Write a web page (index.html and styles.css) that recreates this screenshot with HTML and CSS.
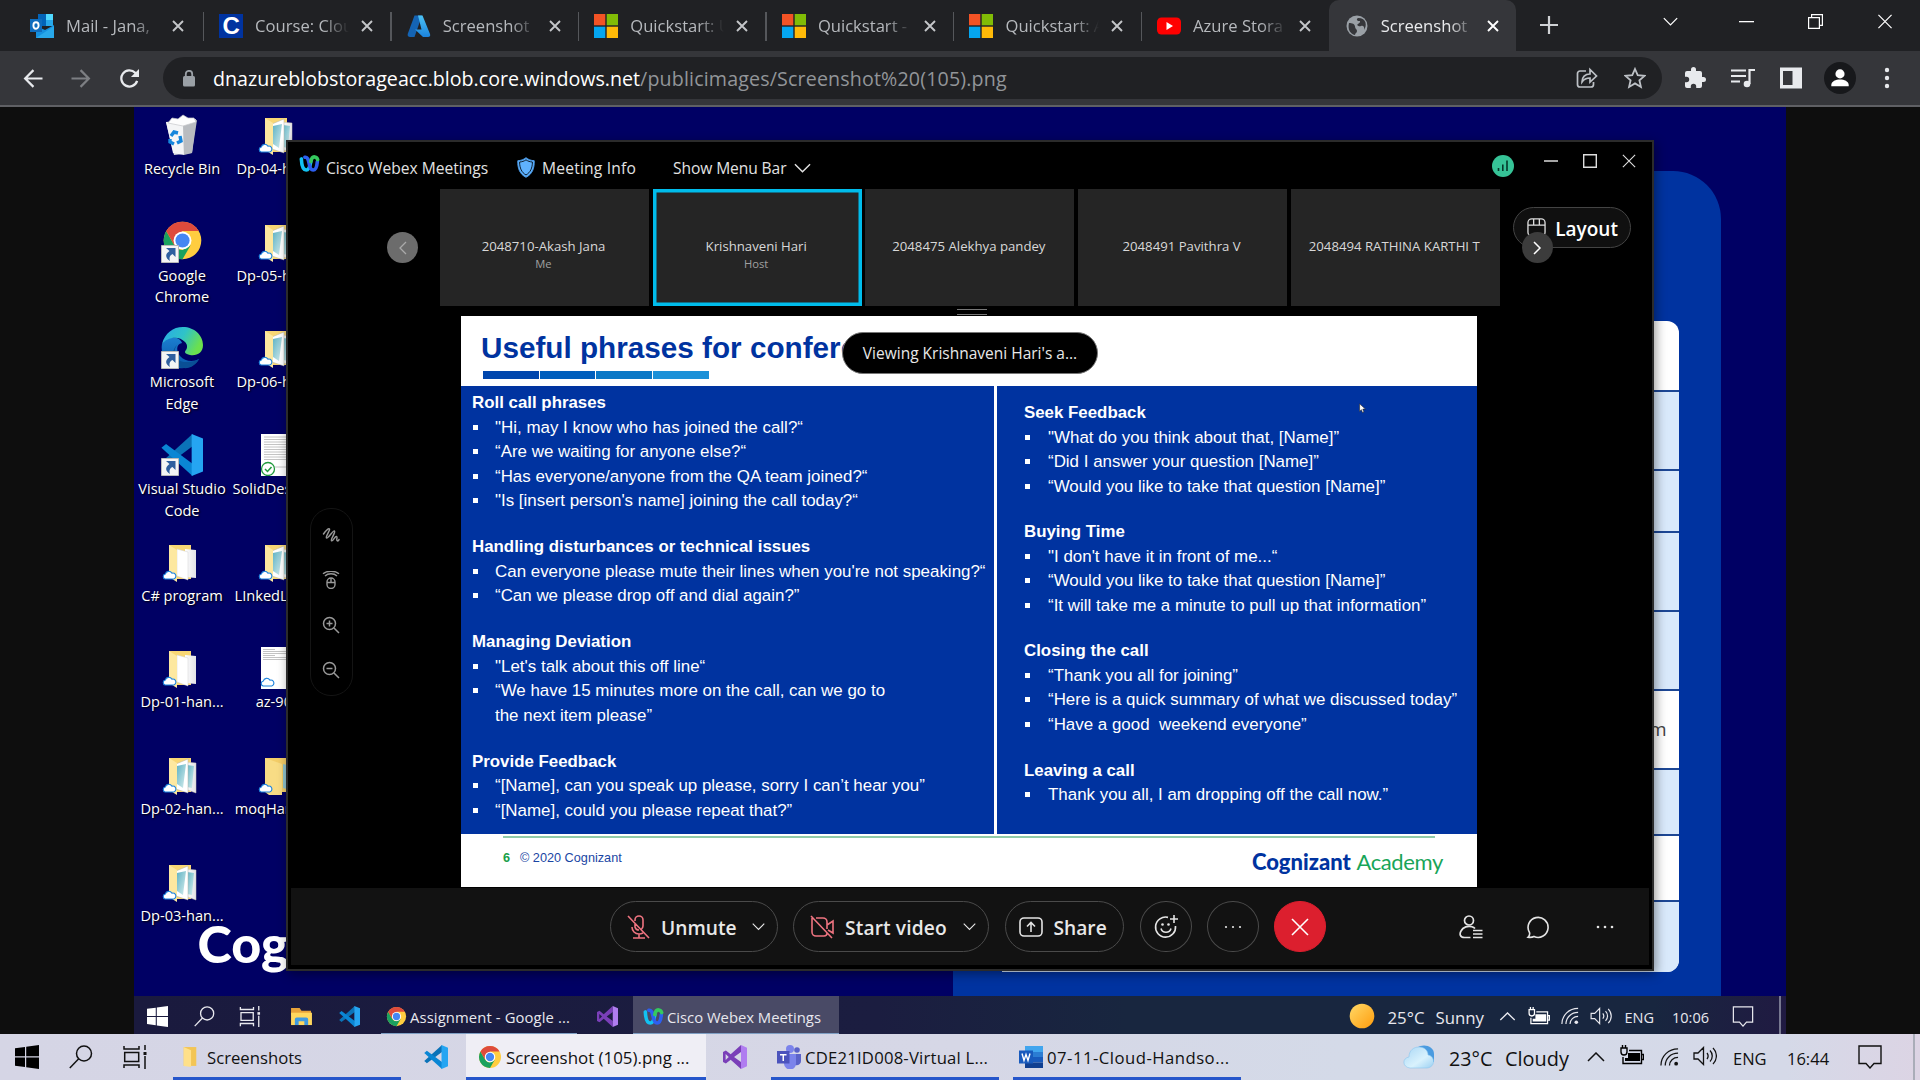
FILE: index.html
```html
<!DOCTYPE html>
<html lang="en">
<head>
<meta charset="utf-8">
<title>Screenshot (105).png</title>
<link rel="stylesheet" href="styles.css">
</head>
<body>
<svg class="defs" width="0" height="0">
  <defs>
    <linearGradient id="g-edge" x1="0" y1="0" x2="1" y2="0.4"><stop offset="0" stop-color="#2aa9e8"/><stop offset=".55" stop-color="#2fc3c8"/><stop offset="1" stop-color="#6be04e"/></linearGradient>
    <linearGradient id="g-edge2" x1="0" y1="0" x2="0" y2="1"><stop offset="0" stop-color="#1b7fd0"/><stop offset="1" stop-color="#0a57a8"/></linearGradient>
    <linearGradient id="g-az" x1="0" y1="0" x2="0" y2="1"><stop offset="0" stop-color="#4cc3f5"/><stop offset="1" stop-color="#1b82dc"/></linearGradient>
    <linearGradient id="g-sun" x1="0" y1="0" x2="1" y2="1"><stop offset="0" stop-color="#ffd968"/><stop offset="1" stop-color="#ff9c0c"/></linearGradient>
    <linearGradient id="g-cloud" x1="0" y1="0" x2="1" y2="1"><stop offset="0" stop-color="#a8d6f5"/><stop offset=".6" stop-color="#d9f2fd"/><stop offset="1" stop-color="#9bd0f2"/></linearGradient>
    <linearGradient id="g-pic" x1="0" y1="0" x2="1" y2="1"><stop offset="0" stop-color="#5fb2c4"/><stop offset="1" stop-color="#d7eeee"/></linearGradient>
    <linearGradient id="g-paper" x1="0" y1="0" x2="1" y2="0"><stop offset="0" stop-color="#ffffff"/><stop offset="1" stop-color="#e2e2e6"/></linearGradient>
  </defs>
  <symbol id="chrome" viewBox="0 0 48 48"><circle cx="24" cy="24" r="22" fill="#ffcd40"/><path fill="#1aa15f" d="M4.950 13 14.470 29.500A11 11 0 0 0 24 35L33.500 29.500 24 46A22 22 0 0 1 4.950 13z"/><path fill="#de4b3c" d="M24 2a22 22 0 0 1 19.050 11H24L14.470 29.500 4.950 13A22 22 0 0 1 24 2z"/><circle cx="24" cy="24" r="10.500" fill="#fff"/><circle cx="24" cy="24" r="8.300" fill="#4587f3"/></symbol>
  <symbol id="vscode" viewBox="0 0 100 100"><path fill="#0b73b8" d="M75 0v29L12 76 1 67z"/><path fill="#0a86d4" d="M75 100V71L12 24 1 33z"/><path fill="#25a5f2" d="M73 0l27 11v78l-27 11z"/></symbol>
  <symbol id="vs" viewBox="0 0 100 100"><path fill="#7a3fb8" fill-rule="evenodd" d="M75 0v100L32 61 12 77 0 71V29l12-6 20 16zM75 29 46 50l29 21zM11 38v24l13-12z"/><path fill="#b07df0" d="M75 0l25 11v78l-25 11z"/></symbol>
  <symbol id="webex" viewBox="0 0 32 26"><g fill="none" stroke-width="5.500" stroke-linecap="round"><path stroke="#12c2f2" d="M3.500 6C4 16 6 23 11 23c4 0 6-6 7-13"/><path stroke="#2d5ff0" d="M9 3.500c4-1 5.500 4 6.500 10 1 6 2.500 9.500 6 9.500 4 0 6-7 6.500-13"/><path stroke="#35c95e" d="M18 10c1-5 3-7.500 6-7 2.500.5 4 2 4.500 4"/></g></symbol>
  <symbol id="ms" viewBox="0 0 24 24"><path fill="#f35325" d="M0 0h11.300v11.300H0z"/><path fill="#81bc06" d="M12.700 0H24v11.300H12.700z"/><path fill="#05a6f0" d="M0 12.700h11.300V24H0z"/><path fill="#ffba08" d="M12.700 12.700H24V24H12.700z"/></symbol>
  <symbol id="win" viewBox="0 0 24 24"><path fill="currentColor" d="M0 3.200 10 1.900v9.400H0zM11.200 1.700 24 0v11.300H11.200zM0 12.500h10V22L0 20.700zM11.200 12.500H24V24l-12.800-1.800z"/></symbol>
  <symbol id="search" viewBox="0 0 24 24"><g fill="none" stroke="currentColor" stroke-width="1.500"><circle cx="15" cy="8.500" r="7.500"/><path d="M9.700 13.800.8 23"/></g></symbol>
  <symbol id="taskview" viewBox="0 0 24 24"><g fill="none" stroke="currentColor" stroke-width="1.500"><path d="M1 1v3h15V1M1 23v-3h15v3M1.700 7.500h14v9h-14zM22 0v5M22 11v13"/></g><path fill="currentColor" d="M20.500 7h3v3h-3z"/></symbol>
  <symbol id="x" viewBox="0 0 12 12"><path fill="none" stroke="currentColor" stroke-width="1.900" d="M1 1l10 10M11 1 1 11"/></symbol>
  <symbol id="xthin" viewBox="0 0 16 16"><path fill="none" stroke="currentColor" stroke-width="1.300" d="M1 1l14 14M15 1 1 15"/></symbol>
  <symbol id="chev" viewBox="0 0 18 10"><path fill="none" stroke="currentColor" stroke-width="1.500" d="M1 1l8 8 8-8"/></symbol>
  <symbol id="chevup" viewBox="0 0 18 10"><path fill="none" stroke="currentColor" stroke-width="1.500" d="M1 9l8-8 8 8"/></symbol>
  <symbol id="battery" viewBox="0 0 24 20"><path fill="currentColor" d="M8 8h12v8H5v-3h3z"/><path fill="none" stroke="currentColor" stroke-width="1.400" d="M9 5.500h12.500v13H3V12M22 9.500h1.500v5H22M1 3v4c0 4 6 4 6 0V3zM2.500 0v3M5.500 0v3"/></symbol>
  <symbol id="wifi" viewBox="0 0 20 20"><g fill="none" stroke="currentColor" stroke-width="1.300"><path d="M1 19C1 9 9 1.500 19 1.500M5.500 19C5.500 11.500 11.500 6 19 6M10 19c0-5 4-8.500 9-8.500"/></g><circle cx="17" cy="17" r="2" fill="currentColor"/></symbol>
  <symbol id="vol" viewBox="0 0 24 20"><g fill="none" stroke="currentColor" stroke-width="1.300"><path d="M1 7h4l5.500-5.500v17L5 13H1zM14 7c1.500 2 1.500 4 0 6M17 4.500c3 3 3 8 0 11M20 2c4.500 4.500 4.500 11.500 0 16"/></g></symbol>
  <symbol id="note" viewBox="0 0 24 24"><path fill="none" stroke="currentColor" stroke-width="1.400" d="M1 1h22v17.500h-7L12 23l-4-4.500H1z"/></symbol>
  <symbol id="arrowbox" viewBox="0 0 18 18"><path fill="#f5f5f5" stroke="#b9b9b9" d="M.5.5h17v17H.5z"/><path fill="#2f5f9f" d="M5 3h9.500v9l-3-3c-3 1.500-3.500 4-2.500 7C4 13 4 9 8.500 6z"/></symbol>
  <symbol id="cloudlet" viewBox="0 0 16 11"><path fill="#fff" stroke="#1b82dc" stroke-width="1.200" d="M3.500 10.300a2.700 2.700 0 0 1 0-5.300A3.800 3.800 0 0 1 10.500 4a3.200 3.200 0 0 1 2 6.300z"/></symbol>
  <symbol id="folder-pic" viewBox="0 0 42 42"><path fill="#f8d775" d="M8 4h22v34H12L8 36z"/><path fill="url(#g-paper)" stroke="#c8c4b8" stroke-width=".5" d="M24 8l11 1v30l-11-4z"/><path fill="url(#g-pic)" d="M26 11l7 1-2 22-5-1z"/><path fill="#fff" stroke="#b5b2a6" stroke-width=".5" d="M15 10l12-5v34l-12-4z"/><path fill="url(#g-pic)" d="M16 12l9-2-3 24-6-4z"/><path fill="#fde8a0" d="M8 4l8 5v32L8 36z"/><use href="#cloudlet" x="1" y="28" width="15" height="11"/></symbol>
  <symbol id="folder-doc" viewBox="0 0 42 42"><path fill="#f8d775" d="M8 4h22v34H12L8 36z"/><path fill="url(#g-paper)" d="M24 8l11 1v28l-11-1z"/><path fill="#fff" stroke="#d0d0d0" stroke-width=".5" d="M16 8l11 3v28l-11-4z"/><path fill="#fde8a0" d="M8 4l8 5v32L8 36z"/><use href="#cloudlet" x="1" y="28" width="15" height="11"/></symbol>
</svg>

<header class="tabstrip">
  <div class="tab tab-first"><svg class="fav" viewBox="0 0 24 24"><path fill="#28a8ea" d="M8 0h15v12H8z"/><path fill="#0364b8" d="M8 0h8v12H8z"/><path fill="#50d9ff" d="M16 0h7v6h-7z"/><path fill="#1490df" d="M6 12l9 4 9-5v13H6z"/><path fill="#28a8ea" d="M6 24 24 12v12z"/><path fill="#0f6cbd" d="M0 5h12v13H0z"/><ellipse cx="6" cy="11.500" rx="2.600" ry="3.200" fill="none" stroke="#fff" stroke-width="1.900"/></svg><span class="tab-text">Mail - Jana,</span><svg class="tab-x"><use href="#x"/></svg></div>
  <div class="tab"><span class="fav fav-c">C</span><span class="tab-text">Course: Clou</span><svg class="tab-x"><use href="#x"/></svg></div>
  <div class="tab"><svg class="fav" viewBox="0 0 24 24"><path fill="#1464b4" d="M7.500 1.500H15L7.500 23H3.200C1 23 .2 21.500.8 19.800z"/><path fill="url(#g-az)" d="M11 1.500h4.500L23 20c.7 1.700-.3 3-2 3h-5L8 15.500h6.500z"/></svg><span class="tab-text">Screenshot</span><svg class="tab-x"><use href="#x"/></svg></div>
  <div class="tab"><svg class="fav"><use href="#ms"/></svg><span class="tab-text">Quickstart: U</span><svg class="tab-x"><use href="#x"/></svg></div>
  <div class="tab"><svg class="fav"><use href="#ms"/></svg><span class="tab-text">Quickstart - </span><svg class="tab-x"><use href="#x"/></svg></div>
  <div class="tab"><svg class="fav"><use href="#ms"/></svg><span class="tab-text">Quickstart: A</span><svg class="tab-x"><use href="#x"/></svg></div>
  <div class="tab tab-last"><svg class="fav" viewBox="0 0 24 24"><rect y="3.500" width="24" height="17" rx="4.500" fill="#f00"/><path fill="#fff" d="M9.500 8l6.500 4-6.500 4z"/></svg><span class="tab-text">Azure Stora</span><svg class="tab-x"><use href="#x"/></svg></div>
  <div class="tab tab-active"><svg class="fav" viewBox="0 0 24 24"><circle cx="12" cy="12" r="10.500" fill="#9aa0a6"/><path fill="#35363a" d="M4 9c3 0 6 1 6 3.500S12 15 12 17s-2 2-2 4c-5-1-7.500-6-6-12zM13 4c-2 1-1 3 1 3s1 2-1 3 1 3 3 2 4 1 3 4c3-4 3-12-6-12z"/></svg><span class="tab-text">Screenshot</span><svg class="tab-x"><use href="#x"/></svg></div>
  <svg class="newtab" viewBox="0 0 18 18"><path fill="none" stroke="#d0d2d5" stroke-width="2.200" d="M9 0v18M0 9h18"/></svg>
  <div class="winctl">
    <svg class="wc-chev"><use href="#chev"/></svg>
    <svg class="wc-min" viewBox="0 0 15 15"><path fill="#fff" d="M0 7h15v1.300H0z"/></svg>
    <svg class="wc-max" viewBox="0 0 15 15"><path fill="none" stroke="#fff" stroke-width="1.200" d="M.6 3.600h10.800v10.800H.6zM3.600 3.600v-3h10.800v10.800h-3"/></svg>
    <svg class="wc-x"><use href="#xthin"/></svg>
  </div>
</header>

<nav class="toolbar">
  <svg class="nav-i" viewBox="0 0 20 20"><path fill="none" stroke="#e8eaed" stroke-width="2.300" d="M20 10H2M10.500 1.200 1.700 10l8.800 8.800"/></svg>
  <svg class="nav-i" viewBox="0 0 20 20"><path fill="none" stroke="#7d7f83" stroke-width="2.300" d="M0 10h18M9.500 1.200l8.800 8.800-8.800 8.800"/></svg>
  <svg class="nav-i nav-r" viewBox="0 0 20 20"><path fill="none" stroke="#e8eaed" stroke-width="2.400" d="M18 12.500A8.500 8.500 0 1 1 16 4l2 2"/><path fill="#e8eaed" d="M20 0v8.500h-8.500z"/></svg>
  <div class="omnibox">
    <svg class="lock" viewBox="0 0 12 17"><rect y="6" width="12" height="10.500" rx="1.500" fill="#9aa0a6"/><path fill="none" stroke="#9aa0a6" stroke-width="1.800" d="M2.800 7V4a3.200 3.200 0 0 1 6.400 0v3"/></svg>
    <span class="url"><b class="host">dnazureblobstorageacc.blob.core.windows.net</b><span class="path">/publicimages/Screenshot%20(105).png</span></span>
    <svg class="ob-i" viewBox="0 0 22 22"><g fill="none" stroke="#bdc1c6" stroke-width="1.700"><path d="M10 4H4a2.500 2.500 0 0 0-2.500 2.500v11A2.500 2.500 0 0 0 4 20h11a2.500 2.500 0 0 0 2.500-2.500V15"/><path d="M6 15c0-5 3-8 8-8V2.500L20.500 9 14 15v-4c-4 0-6 1-8 4z"/></g></svg>
    <svg class="ob-i ob-star" viewBox="0 0 22 22"><path fill="none" stroke="#bdc1c6" stroke-width="1.800" d="M11 2l2.700 6.200 6.800.6-5.100 4.500 1.500 6.600-5.900-3.500-5.900 3.500 1.500-6.600-5.100-4.500 6.800-.6z"/></svg>
  </div>
  <svg class="tb-i" viewBox="0 0 24 24"><path fill="#e8eaed" d="M20.500 11H19V7a2 2 0 0 0-2-2h-4V3.500a2.500 2.500 0 0 0-5 0V5H4a2 2 0 0 0-2 2v3.800h1.500a2.700 2.700 0 0 1 0 5.400H2V20a2 2 0 0 0 2 2h3.800v-1.500a2.700 2.700 0 0 1 5.400 0V22H17a2 2 0 0 0 2-2v-4h1.500a2.500 2.500 0 0 0 0-5z"/></svg>
  <svg class="tb-i" viewBox="0 0 24 24"><g fill="none" stroke="#e8eaed" stroke-width="2.200"><path d="M0 4.500h15M0 10h15M0 15.500h9M18.500 18V4H24"/></g><circle cx="16" cy="18" r="3.300" fill="#e8eaed"/></svg>
  <svg class="tb-i" viewBox="0 0 24 24"><path fill="#e8eaed" fill-rule="evenodd" d="M1 1.500h22v21H1zM4 5v14h9.500V5z"/></svg>
  <span class="avatar"><svg viewBox="0 0 24 24"><circle cx="12" cy="7.500" r="5" fill="#fff"/><path fill="#fff" d="M2.500 21v-1.500c0-4 5-6 9.500-6s9.500 2 9.500 6V21z"/></svg></span>
  <svg class="dots" viewBox="0 0 6 22"><g fill="#e8eaed"><circle cx="3" cy="3" r="2.200"/><circle cx="3" cy="11" r="2.200"/><circle cx="3" cy="19" r="2.200"/></g></svg>
</nav>

<main class="viewer">
<div class="desktop">
  <div class="panel"></div>
  <div class="table">
    <div class="tr r1"></div><div class="tr r2 alt"></div><div class="tr r3 alt"></div><div class="tr r4 alt"></div><div class="tr r5 alt"></div><div class="tr r6">m</div><div class="tr r7 alt"></div><div class="tr r8"></div><div class="tr r9 alt"></div>
  </div>
  <div class="brand">Cognizant</div>
  <div class="icons col1">
    <figure><svg viewBox="0 0 42 42"><path fill="#d9dbde" d="M5 8l30-3-4 34-18 2z"/><path fill="#f4f5f6" d="M5 8l17 2 1 31-11-2z"/><path fill="#b9bcc0" d="M22 10l14-4-5 33-8 2z"/><path fill="#fdfdfd" stroke="#c7c9cc" stroke-width=".7" d="M7 9l4-5 6 1 5-4 5 3 6 0 2 4-13 4z"/><path fill="none" stroke="#1586dc" stroke-width="3.400" d="M10 22l3-4 4 1M19 22l1 5-4 2M13 30l-4-2 0-3"/></svg><figcaption>Recycle Bin</figcaption></figure>
    <figure><svg viewBox="0 0 42 42"><use href="#chrome" x="1" y="-1" width="41" height="41"/><use href="#arrowbox" x="0" y="24" width="18" height="18"/></svg><figcaption>Google<br>Chrome</figcaption></figure>
    <figure><svg viewBox="0 0 42 42"><path fill="url(#g-edge2)" d="M1 17C6 8 19 9 21 16c-6 1-6 8-2 13 5 6 14 6 19 3-4 7-12 10-20 9C6 40-1 28 1 17z"/><path fill="#0a4f95" d="M17 17c-7 7-3 19 9 18 5 0 9-1 12-3-3 6-9 10-16 9-10-1-14-17-5-24z"/><path fill="url(#g-edge)" d="M1 17C4 6 12 0 22 0c11 0 20 8 20 18 0 8-6 11-13 10-5-1-6-3-4-5 2-3 1-6-1-8C18 8 6 10 1 17z"/><use href="#arrowbox" x="0" y="24" width="18" height="18"/></svg><figcaption>Microsoft<br>Edge</figcaption></figure>
    <figure><svg viewBox="0 0 42 42"><use href="#vscode" width="42" height="42"/><use href="#arrowbox" x="0" y="24" width="18" height="18"/></svg><figcaption>Visual Studio<br>Code</figcaption></figure>
    <figure><svg><use href="#folder-doc"/></svg><figcaption>C# program</figcaption></figure>
    <figure><svg><use href="#folder-doc"/></svg><figcaption>Dp-01-han...</figcaption></figure>
    <figure><svg><use href="#folder-pic"/></svg><figcaption>Dp-02-han...</figcaption></figure>
    <figure><svg><use href="#folder-pic"/></svg><figcaption>Dp-03-han...</figcaption></figure>
  </div>
  <div class="icons col2">
    <figure><svg><use href="#folder-pic"/></svg><figcaption>Dp-04-han...</figcaption></figure>
    <figure><svg><use href="#folder-pic"/></svg><figcaption>Dp-05-han...</figcaption></figure>
    <figure><svg><use href="#folder-pic"/></svg><figcaption>Dp-06-han...</figcaption></figure>
    <figure><svg viewBox="0 0 42 42"><path fill="#fff" d="M4 0h34v42H4z"/><path stroke="#b5b5b5" stroke-width=".8" d="M7 3h30M7 5.500h30M7 8h30M7 10.500h30M7 13h30M7 15.500h30M7 18h30M7 20.500h30M7 23h30M7 25.500h30M7 33h30"/><circle cx="11" cy="35" r="6.500" fill="#fff" stroke="#1f9a3c" stroke-width="1.300"/><path fill="none" stroke="#1f9a3c" stroke-width="1.500" d="M8 35l2.500 2.500 4-4.500"/></svg><figcaption>SolidDesign...</figcaption></figure>
    <figure><svg><use href="#folder-pic"/></svg><figcaption>LInkedLear...</figcaption></figure>
    <figure><svg viewBox="0 0 42 42"><path fill="#fff" d="M4 0h34v42H4z"/><path stroke="#bcbcbc" stroke-width=".9" d="M6 2.500h12M6 4.500h31M6 6.500h31M6 8.500h12M6 10.500h31M6 12.500h31"/><use href="#cloudlet" x="3" y="29" width="15" height="11"/></svg><figcaption>az-900</figcaption></figure>
    <figure><svg viewBox="0 0 42 42"><path fill="#f3cd68" d="M8 4h26v34H8z"/><path fill="#8fc4cf" d="M26 10l8 2v24l-8-2z"/><path fill="#f8dc85" d="M8 4l17 6v31H12l-4-3z"/><use href="#cloudlet" x="1" y="28" width="15" height="11"/></svg><figcaption>moqHands...</figcaption></figure>
  </div>

  <section class="webex">
    <header class="wx-title">
      <svg class="wx-logo"><use href="#webex"/></svg><span class="wx-name">Cisco Webex Meetings</span>
      <svg class="wx-shield" viewBox="0 0 18 21"><path fill="#5fb2ff" stroke="#4a9ae8" d="M9 .7c2.500 2 5 2.800 8.200 3C17.500 11 15.500 17 9 20.300 2.500 17 .5 11 .8 3.700 4 3.500 6.500 2.700 9 .7z"/><path fill="none" stroke="#0b1a2a" d="M9 2.800c2 1.500 4 2 6.400 2.200 0 6-2 10.500-6.400 13-4.400-2.500-6.400-7-6.400-13C5 4.800 7 4.300 9 2.800z"/></svg><span class="wx-info">Meeting Info</span>
      <span class="wx-menu">Show Menu Bar</span><svg class="wx-chev"><use href="#chev"/></svg>
      <svg class="wx-signal" viewBox="0 0 22 22"><circle cx="11" cy="11" r="11" fill="#36c397"/><path stroke="#04372a" stroke-width="1.600" d="M6.500 13v3M10.800 9.500V16M15 5.500V16"/></svg>
      <svg class="wx-c c1" viewBox="0 0 14 14"><path stroke="#ddd" stroke-width="1.500" d="M0 7h14"/></svg>
      <svg class="wx-c c2" viewBox="0 0 14 14"><path fill="none" stroke="#ddd" stroke-width="1.400" d="M.7.7h12.600v12.600H.7z"/></svg>
      <svg class="wx-c c3"><use href="#xthin"/></svg>
    </header>
    <div class="film">
      <span class="circ prev"><svg viewBox="0 0 10 14"><path fill="none" stroke="#aaa" stroke-width="1.300" d="M8 1 2 7l6 6"/></svg></span>
      <div class="tiles">
        <div class="tile"><b>2048710-Akash Jana</b><i>Me</i></div>
        <div class="tile speaking"><b>Krishnaveni Hari</b><i>Host</i></div>
        <div class="tile"><b>2048475 Alekhya pandey</b></div>
        <div class="tile"><b>2048491 Pavithra V</b></div>
        <div class="tile"><b>2048494 RATHINA KARTHI T</b></div>
      </div>
      <div class="layout-btn"><svg viewBox="0 0 20 20"><g fill="none" stroke="#ddd" stroke-width="1.400"><rect x="1" y="1" width="18" height="18" rx="4"/><path d="M1 7.500h18M7 1v6.500M13 1v6.500"/></g></svg><span>Layout</span></div>
      <span class="circ next"><svg viewBox="0 0 10 14"><path fill="none" stroke="#fff" stroke-width="1.500" d="M2 1l6 6-6 6"/></svg></span>
    </div>
    <div class="grip"><span></span></div>
    <div class="stage">
      <div class="tools">
        <svg viewBox="0 0 18 18"><path fill="none" stroke="#999" stroke-width="1.500" stroke-linecap="round" d="M1.500 8c2-3 5-6 6-5S3 11 4.500 12 11 4 12.500 5 8 14 9.500 14.800 13 10 14.500 10.500s-.5 3 .5 4 2-.5 2-1"/></svg>
        <svg viewBox="0 0 18 18"><g fill="none" stroke="#999" stroke-width="1.400"><rect x="5" y="7" width="8" height="10.500" rx="4"/><path d="M5 11.500h8M9 7v4.500M3 5c3-3 9-3 12 0M1 2.800c4-3.500 12-3.500 16 0"/></g></svg>
        <svg viewBox="0 0 18 18"><g fill="none" stroke="#999" stroke-width="1.500"><circle cx="7.500" cy="7.500" r="6"/><path d="M12 12l5 5M4.500 7.500h6M7.500 4.500v6"/></g></svg>
        <svg viewBox="0 0 18 18"><g fill="none" stroke="#999" stroke-width="1.500"><circle cx="7.500" cy="7.500" r="6"/><path d="M12 12l5 5M4.500 7.500h6"/></g></svg>
      </div>
      <article class="slide">
        <h1>Useful phrases for conference</h1>
        <div class="bars"><span></span><span></span><span></span><span></span></div>
        <div class="cols">
          <div class="left">
            <h2>Roll call phrases</h2>
            <ul><li>"Hi, may I know who has joined the call?“</li><li>“Are we waiting for anyone else?“</li><li>“Has everyone/anyone from the QA team joined?“</li><li>"Is [insert person's name] joining the call today?“</li></ul>
            <h2>Handling disturbances or technical issues</h2>
            <ul><li>Can everyone please mute their lines when you're not speaking?“</li><li>“Can we please drop off and dial again?”</li></ul>
            <h2>Managing Deviation</h2>
            <ul><li>"Let's talk about this off line“</li><li>“We have 15 minutes more on the call, can we go to<br>the next item please”</li></ul>
            <h2>Provide Feedback</h2>
            <ul><li>“[Name], can you speak up please, sorry I can’t hear you”</li><li>“[Name], could you please repeat that?”</li></ul>
          </div>
          <div class="right">
            <h2>Seek Feedback</h2>
            <ul><li>"What do you think about that, [Name]”</li><li>“Did I answer your question [Name]”</li><li>“Would you like to take that question [Name]”</li></ul>
            <h2>Buying Time</h2>
            <ul><li>"I don't have it in front of me...“</li><li>“Would you like to take that question [Name]”</li><li>“It will take me a minute to pull up that information”</li></ul>
            <h2>Closing the call</h2>
            <ul><li>“Thank you all for joining”</li><li>“Here is a quick summary of what we discussed today”</li><li>“Have a good&nbsp; weekend everyone”</li></ul>
            <h2>Leaving a call</h2>
            <ul><li>Thank you all, I am dropping off the call now.”</li></ul>
          </div>
        </div>
        <footer><span class="num">6</span><span class="copy">© 2020 Cognizant</span><span class="logo-c">Cognizant</span><span class="logo-a">Academy</span></footer>
        <div class="viewing">Viewing Krishnaveni Hari's a...</div>
        <svg class="cursor" viewBox="0 0 12 18"><path fill="#fff" stroke="#222" d="M1 1v13l3-3 2 5 2.500-1-2-5H11z"/></svg>
      </article>
    </div>
    <footer class="controls">
      <div class="pill p-mute"><svg class="ic" viewBox="0 0 24 24"><g fill="none" stroke="#ee7480" stroke-width="1.600"><path d="M8 6V5a4 4 0 0 1 8 0v6a4 4 0 0 1-1.500 3M8 9v3a4 4 0 0 0 4 3M5 12c0 4 3 7 7 7 2 0 3-.5 4-1M12 19v4M6 23h12M1 1l21 22"/></g></svg><span>Unmute</span><svg class="pc"><use href="#chev"/></svg></div>
      <div class="pill p-video"><svg class="ic" viewBox="0 0 24 24"><g fill="none" stroke="#ee7480" stroke-width="1.600"><path d="M6 3h7a4 4 0 0 1 4 4v7M17 10l6-4v12l-5-3M2 3v14a4 4 0 0 0 4 4h8c2 0 3-1 3-3M1 1l21 22"/></g></svg><span>Start video</span><svg class="pc"><use href="#chev"/></svg></div>
      <div class="pill p-share"><svg class="ic" viewBox="0 0 24 24"><g fill="none" stroke="#e4e4e4" stroke-width="1.600"><rect x="1" y="3" width="22" height="18" rx="4"/><path d="M12 17V8M8 11.500 12 7.500l4 4"/></g></svg><span>Share</span></div>
      <div class="round"><svg viewBox="0 0 24 24"><g fill="none" stroke="#e4e4e4" stroke-width="1.600"><path d="M14 2.400A10 10 0 1 0 21.500 11M7 13.500c1.500 5 8.500 5 10 0M20 0v8M16 4h8"/></g><circle cx="8.500" cy="9.500" r="1.300" fill="#e4e4e4"/><circle cx="14.500" cy="9.500" r="1.300" fill="#e4e4e4"/></svg></div>
      <div class="round"><svg viewBox="0 0 24 24"><g fill="#e4e4e4"><circle cx="5" cy="12" r="1.100"/><circle cx="12" cy="12" r="1.100"/><circle cx="19" cy="12" r="1.100"/></g></svg></div>
      <div class="round leave"><svg viewBox="0 0 24 24"><path fill="none" stroke="#fff" stroke-width="1.600" d="M4 4l16 16M20 4 4 20"/></svg></div>
      <svg class="rc rc1" viewBox="0 0 24 24"><g fill="none" stroke="#e4e4e4" stroke-width="1.700"><circle cx="10" cy="5.500" r="4.500"/><path d="M11.500 22.500H5.500C1 22.500.3 19 2 16c2-4 7-5.500 11-4.200 1.500.5 2.500 1.200 3 1.700M14 15.500h9.500M14 19h9.500M14 22.500h9.500"/></g></svg>
      <svg class="rc rc2" viewBox="0 0 24 24"><path fill="none" stroke="#e4e4e4" stroke-width="1.600" d="M3.500 17.500A10 10 0 1 1 8 21.500c-2 1-4 1-6 .7 1.500-1.500 2-3 1.500-4.700z"/></svg>
      <svg class="rc rc3" viewBox="0 0 24 24"><g fill="#e4e4e4"><circle cx="5" cy="12" r="1.300"/><circle cx="12" cy="12" r="1.300"/><circle cx="19" cy="12" r="1.300"/></g></svg>
    </footer>
  </section>

  <footer class="inner-bar">
    <svg class="ib-win"><use href="#win"/></svg>
    <svg class="ib-search"><use href="#search"/></svg>
    <svg class="ib-tv"><use href="#taskview"/></svg>
    <svg class="ib-exp" viewBox="0 0 22 20"><path fill="#e8a33a" d="M0 1h9l2 3h10v5H0z"/><path fill="#ffd75e" d="M0 6h22v13H0z"/><path fill="#3f9ae0" d="M4 19v-6a2 2 0 0 1 2-2h10a2 2 0 0 1 2 2v6h-4v-4H8v4z"/></svg>
    <svg class="ib-code"><use href="#vscode"/></svg>
    <div class="ib-task ib-chrome"><svg><use href="#chrome"/></svg><span>Assignment - Google ...</span></div>
    <svg class="ib-vs"><use href="#vs"/></svg>
    <div class="ib-task ib-webex"><svg><use href="#webex"/></svg><span>Cisco Webex Meetings</span></div>
    <svg class="ib-sun" viewBox="0 0 26 26"><circle cx="13" cy="13" r="12.300" fill="url(#g-sun)"/></svg>
    <span class="ib-deg">25°C</span><span class="ib-sky">Sunny</span>
    <svg class="ib-up"><use href="#chevup"/></svg><svg class="ib-bat"><use href="#battery"/></svg><svg class="ib-wifi"><use href="#wifi"/></svg><svg class="ib-vol"><use href="#vol"/></svg>
    <span class="ib-lang">ENG</span><span class="ib-time">10:06</span>
    <svg class="ib-note"><use href="#note"/></svg><i class="ib-edge"></i>
  </footer>
</div>
</main>

<footer class="outer-bar">
  <svg class="ob-win"><use href="#win"/></svg>
  <svg class="ob-search"><use href="#search"/></svg>
  <svg class="ob-tv"><use href="#taskview"/></svg>
  <div class="task t-files"><svg viewBox="0 0 14 21"><path fill="#f3c555" d="M1 1h12v18H1z"/><path fill="#ffe08a" d="M1 1l7 3v16l-7-1z"/></svg><span>Screenshots</span></div>
  <svg class="ob-code"><use href="#vscode"/></svg>
  <div class="task t-chrome"><svg><use href="#chrome"/></svg><span>Screenshot (105).png ...</span></div>
  <svg class="ob-vs"><use href="#vs"/></svg>
  <div class="task t-teams"><svg viewBox="0 0 24 24"><circle cx="20" cy="5" r="2.800" fill="#5b62c9"/><circle cx="13" cy="4" r="4" fill="#7b83eb"/><path fill="#5b62c9" d="M15 9h9v7c0 3-3 5-6 4z"/><path fill="#7b83eb" d="M7 9h12v9a6 6 0 0 1-12 1z"/><path fill="#4b53bc" d="M0 6h12.500v12.500H0z"/><path fill="#fff" d="M3 9h6.500v1.500H7V16H5.500v-5.500H3z"/></svg><span>CDE21ID008-Virtual L...</span></div>
  <div class="task t-word"><svg viewBox="0 0 24 24"><path fill="#41a5ee" d="M6 1h18v6H6z"/><path fill="#2b7cd3" d="M6 7h18v5H6z"/><path fill="#185abd" d="M6 12h18v5.500H6z"/><path fill="#103f91" d="M6 17.500h18V23H6z"/><path fill="#185abd" d="M0 5.500h14v13H0z"/><path fill="none" stroke="#fff" stroke-width="1.400" d="M3 8.500l2 7 2-6 2 6 2-7"/></svg><span>07-11-Cloud-Handso...</span></div>
  <svg class="ob-cloud" viewBox="0 0 32 24"><path fill="#4a9be0" d="M14 3c6-5 17-2 17 6v8H16z"/><path fill="url(#g-cloud)" stroke="#8cc6ef" stroke-width=".6" d="M7 23C-1 22-1 13 6 12 6 5 11 2 16 2c6 0 9 4 9 8 7 1 8 12-1 13z"/></svg>
  <span class="ob-deg">23°C</span><span class="ob-sky">Cloudy</span>
  <svg class="ob-up"><use href="#chevup"/></svg><svg class="ob-bat"><use href="#battery"/></svg><svg class="ob-wifi"><use href="#wifi"/></svg><svg class="ob-vol"><use href="#vol"/></svg>
  <span class="ob-lang">ENG</span><span class="ob-time">16:44</span>
  <svg class="ob-note"><use href="#note"/></svg><i class="ob-edge"></i>
</footer>
</body>
</html>
```
FILE: styles.css
```css
* { box-sizing: border-box; }
body { margin: 0; width: 1920px; height: 1080px; overflow: hidden; background: #0e0e0e; font-family: "Open Sans", "Noto Sans", sans-serif; color: #fff; display: flex; flex-direction: column; }
svg { display: block; flex: none; }
.defs { position: absolute; }
h1, h2, ul, figure { margin: 0; padding: 0; }
span, b, i { white-space: nowrap; }

/* browser tabs */
.tabstrip { height: 51px; flex: none; background: #202124; display: flex; padding-left: 15.500px; }
.tab { width: 187.600px; height: 51px; padding: 0 0 0 16px; display: flex; align-items: center; color: #b6b9bd; position: relative; }
.tab::after { content: ""; position: absolute; right: -1px; top: 12px; width: 1.500px; height: 29px; background: #55575b; }
.tab-last::after, .tab-active::after { display: none; }
.tab-first { padding-left: 14.500px; }
.tab-active { background: #35363a; color: #e9eaec; border-radius: 10px 10px 0 0; }
.fav { width: 24px; height: 24px; margin-right: 12px; }
.fav-c { background: #0033a0; color: #fff; font: bold 24px/24px "Liberation Sans", sans-serif; text-align: center; flex: none; }
.tab-text { width: 95px; flex: none; overflow: hidden; white-space: pre; font-size: 16.600px; line-height: 24px; -webkit-mask-image: linear-gradient(90deg, #000 68px, transparent 94px); mask-image: linear-gradient(90deg, #000 68px, transparent 94px); }
.tab-x { width: 12px; height: 12px; margin-left: 11px; color: #c4c6c9; }
.tab-active .tab-x { color: #fff; }
.newtab { width: 18px; height: 18px; margin: 16px 0 0 24px; }
.winctl { display: flex; margin-left: auto; padding: 14px 27px 0 0; }
.wc-chev { width: 15px; height: 9px; margin: 3px 61px 0 0; }
.wc-min, .wc-max { width: 15px; height: 15px; margin-right: 54px; }
.wc-x { width: 16px; height: 15px; }

/* toolbar */
.toolbar { height: 56px; flex: none; background: #35363a; border-bottom: 2px solid #5f6064; display: flex; align-items: center; padding-left: 23px; }
.nav-i { width: 20px; height: 19px; margin-right: 28px; }
.nav-r { width: 21px; margin-right: 23px; }
.omnibox { width: 1499px; height: 42px; border-radius: 21px; background: #202124; display: flex; align-items: center; padding-left: 20px; margin-right: 21px; }
.lock { width: 12px; height: 17px; margin-right: 18px; }
.url { line-height: 28px; margin: 2px auto 0 0; font-size: 19.650px; }
.host { font-weight: 400; color: #fff; }
.path { color: #929599; letter-spacing: 0.150px; }
.ob-i { width: 22px; height: 22px; margin-right: 26px; }
.ob-star { margin-right: 16px; }
.tb-i { width: 24px; height: 24px; margin-right: 24px; }
.avatar { width: 32px; height: 32px; border-radius: 50%; background: #17181b; display: grid; place-items: center; margin: 0 28px 0 -3px; }
.avatar svg { width: 22px; height: 22px; }
.dots { width: 6px; height: 22px; }

/* shown picture: a desktop */
.viewer { flex: none; height: 927px; padding-left: 134px; }
.desktop { position: relative; width: 1652px; height: 927px; background: #000064; overflow: hidden; }
.panel { position: absolute; left: 819px; top: 64px; width: 768px; height: 825px; background: #0033a0; border-radius: 0 48px 0 0; }
.table { position: absolute; left: 868px; top: 214px; width: 676.500px; height: 651px; border-radius: 12px 12px 12px 0; overflow: hidden; background: #fff; }
.tr { border-bottom: 2px solid #1d4795; color: #444; font-size: 19px; text-align: right; padding-right: 12px; }
.alt { background: #d9e9fb; }
.r1 { height: 70.500px; } .r2 { height: 79px; } .r3 { height: 62px; } .r4 { height: 79px; } .r5 { height: 79px; } .r6 { height: 79px; line-height: 76px; } .r7 { height: 66px; } .r8 { height: 66px; } .r9 { height: 71px; border: 0; }
.brand { position: absolute; left: 63.500px; top: 805px; font: 900 52px/62px Lato, sans-serif; }
.icons { position: absolute; top: 7px; width: 110px; display: grid; grid-auto-rows: 106.700px; }
.col1 { left: -7px; }
.col2 { left: 89px; }
.icons figure { display: flex; flex-direction: column; align-items: center; }
.icons svg { width: 42px; height: 42px; }
.icons figcaption { margin-top: 2px; font-size: 14.600px; line-height: 21.500px; text-align: center; white-space: nowrap; text-shadow: 1px 1px 2px #000; }

/* meeting window */
.webex { position: absolute; left: 152px; top: 33px; width: 1368px; height: 831px; background: #000; box-shadow: inset 0 0 0 2px #2b2b2b, 2px 3px 10px rgba(0,0,0,.4); color: #e2e2e2; }
.wx-title { height: 49px; padding: 6px 18px 0 13px; display: flex; align-items: center; font-size: 15.600px; font-weight: 500; }
.wx-logo { width: 21px; height: 17px; margin: -9px 6px 0 0; }
.wx-name { width: 191px; }
.wx-shield { width: 18px; height: 21px; margin-right: 7px; }
.wx-info { width: 131px; letter-spacing: 0.200px; }
.wx-menu { width: 121px; letter-spacing: -0.100px; }
.wx-chev { width: 17px; height: 10px; margin-right: auto; }
.wx-signal { width: 22px; height: 22px; margin: -4px 30px 0 0; }
.wx-c { width: 14px; height: 14px; margin: -13px 25px 0 0; color: #ddd; }
.c3 { margin-right: 0; }
.film { position: relative; height: 116.500px; display: flex; padding-left: 101px; }
.circ { width: 31px; height: 31px; border-radius: 50%; display: grid; place-items: center; }
.circ svg { width: 10px; height: 14px; }
.prev { background: #6c6c6c; margin: 43px 22px 0 0; }
.next { position: absolute; left: 1235.500px; top: 43px; background: #3c3c3c; }
.tiles { display: flex; gap: 3.700px; }
.tile { width: 209px; height: 116.500px; background: #252525; padding: 47px 2px 0 0; text-align: center; }
.tile b, .tile i { display: block; font-weight: 400; font-style: normal; font-size: 13.200px; line-height: 20px; color: #d8d8d8; }
.tile i { font-size: 11.200px; line-height: 16px; color: #a0a0a0; }
.speaking { box-shadow: inset 0 0 0 3.500px #00bceb; }
.layout-btn { width: 118px; height: 41px; margin: 18px 0 0 13.500px; border: 1px solid #444; border-radius: 21px; background: #101010; display: flex; align-items: center; padding: 2px 0 0 13px; font-size: 19px; font-weight: 600; color: #fff; line-height: 24px; }
.layout-btn svg { width: 19px; height: 19px; margin: -2px 9px 0 0; }
.grip { height: 10.500px; padding: 3px 0 0 671px; }
.grip span { display: block; width: 30px; height: 6px; border: solid #777; border-width: 1.500px 0; }
.stage { height: 572px; display: flex; }
.tools { width: 42.500px; height: 187.500px; margin: 192px 108.500px 0 24px; border: 1.500px solid #141414; border-radius: 21px; display: flex; flex-direction: column; justify-content: space-between; align-items: center; padding: 17px 0 15px; }
.tools svg { width: 18px; height: 18px; }
.slide { position: relative; width: 1016px; height: 571px; background: #fff; font-family: "Liberation Sans", Arial, sans-serif; color: #fff; }
.slide h1 { height: 55px; padding: 14px 0 0 20px; font-size: 29.700px; line-height: 36px; color: #0033a0; white-space: nowrap; }
.bars { display: flex; gap: 1px; height: 7.500px; margin: 0 0 7px 22px; }
.bars span { width: 55.700px; background: #0046ad; }
.bars span:nth-child(2) { background: #005fbd; }
.bars span:nth-child(3) { background: #0a78c6; }
.bars span:nth-child(4) { background: #1c91d8; }
.cols { display: flex; height: 448px; background: #0033a0; }
.left { width: 535.500px; border-right: 3px solid #fff; padding: 5.500px 0 0 11px; }
.right { padding: 15.500px 0 0 27.500px; }
.cols h2 { font-size: 16.880px; line-height: 24.500px; white-space: nowrap; }
.cols ul { list-style: none; margin-bottom: 21.500px; }
.right ul { margin-bottom: 21.200px; }
.cols li { position: relative; font-size: 16.930px; line-height: 24.500px; padding-left: 23px; white-space: nowrap; }
.right li { padding-left: 24px; }
.cols li::before { content: ""; position: absolute; left: 1px; top: 9px; width: 5px; height: 5px; background: #fff; }
.slide footer { height: 53px; margin: 2px 42px 0 42px; border-top: 2px solid #8fcbaa; display: flex; line-height: 40px; font-size: 12.700px; color: #1a46a4; }
.slide footer span { flex: none; }
.num { color: #18a04b; font-weight: 700; width: 17px; }
.copy { width: 732px; }
.logo-c { font: 900 22px/48px Lato, sans-serif; color: #0033a0; width: 104.500px; }
.logo-a { font: 400 22px/48px Lato, sans-serif; color: #18a558; letter-spacing: -0.400px; }
.viewing { position: absolute; left: 381px; top: 15.500px; width: 256px; height: 42px; border: 1px solid #777; border-radius: 21px; background: #000; text-align: center; font: 15.500px/41px "Open Sans", sans-serif; color: #e8e8e8; white-space: nowrap; }
.cursor { position: absolute; left: 898px; top: 87px; width: 7px; height: 11px; }
.controls { margin: 0 5px; height: 77px; background: #121212; display: flex; align-items: flex-start; padding: 13px 0 0 319px; }
.pill { height: 51px; border: 1.500px solid #4a4a4a; border-radius: 26px; display: flex; align-items: center; font-size: 19.200px; font-weight: 600; color: #e8e8e8; padding-left: 16px; line-height: 28px; }
.pill span { margin-top: 2px; }
.ic { width: 24px; height: 24px; }
.p-mute { width: 167.500px; margin-right: 15.500px; }
.p-mute span { width: 91px; margin-left: 10px; }
.p-video { width: 196px; margin-right: 16px; }
.p-video span { width: 118px; margin-left: 11px; letter-spacing: 0.120px; }
.p-share { width: 119px; margin-right: 16px; padding-left: 12.500px; }
.p-share span { margin-left: 11px; }
.pc { width: 13px; height: 9px; }
.round { width: 51.500px; height: 51px; border: 1.500px solid #4a4a4a; border-radius: 50%; display: grid; place-items: center; margin-right: 15.500px; }
.round svg { width: 24px; height: 24px; }
.leave { background: #dc1f2e; border-color: #dc1f2e; }
.rc { width: 24px; height: 24px; margin-top: 14px; }
.rc1 { margin-left: 118px; }
.rc2 { margin-left: 43px; }
.rc3 { margin-left: 43px; }

/* taskbar inside the picture */
.inner-bar { position: absolute; left: 0; right: 0; bottom: 0; height: 38px; display: flex; align-items: center; background: linear-gradient(90deg, #1a1a3e 0, #1b1d40 45%, #18263f 60%, #18263f 92%, #201a42 100%); padding-left: 13px; color: #e8e8ee; font-size: 14.500px; }
.inner-bar > svg { margin-top: 2px; }
.inner-bar span { margin-top: 4px; }
.ib-win { width: 21px; height: 21px; margin-right: 26px; color: #fff; }
.ib-search { width: 21px; height: 21px; margin-right: 24px; }
.ib-tv { width: 22px; height: 21px; margin-right: 30px; }
.ib-exp { width: 21px; height: 19px; margin-right: 27px; }
.ib-code { width: 21px; height: 21px; margin-right: 21px; }
.ib-task { height: 38px; display: flex; align-items: center; border-bottom: 1.500px solid #7f9fc4; font-size: 14.800px; }
.ib-task svg { margin-top: 3px; }
.ib-chrome { width: 196px; padding-left: 5px; margin-right: 20px; letter-spacing: 0.120px; }
.ib-chrome svg { width: 21px; height: 21px; margin-right: 3px; }
.ib-vs { width: 21px; height: 21px; margin-right: 15px; }
.ib-webex { width: 206px; padding-left: 10px; background: #494a66; }
.ib-webex svg { width: 21px; height: 17px; margin-right: 3px; }
.ib-sun { width: 26px; height: 26px; margin-left: auto; margin-right: 13px; }
.ib-deg { width: 48px; font-size: 16.800px; }
.ib-sky { width: 63px; font-size: 16.800px; }
.ib-up { width: 17px; height: 9px; margin-right: 12px; }
.ib-bat { width: 22px; height: 18px; margin-right: 11px; color: #fff; }
.ib-wifi { width: 18px; height: 18px; margin-right: 11px; }
.ib-vol { width: 22px; height: 18px; margin-right: 13px; }
.ib-lang { width: 47.500px; }
.ib-time { width: 60px; }
.ib-note { width: 22px; height: 21px; margin-right: 25px; }
.ib-edge { width: 2px; height: 38px; background: #777890; margin-right: 5px; }

/* taskbar */
.outer-bar { height: 46px; flex: none; display: flex; align-items: center; background: linear-gradient(90deg, #d5d5e5 0, #d6d7e6 50%, #d4dae8 70%, #d5d9e8 93%, #dcd4e4 100%); padding-left: 15px; color: #111; font-size: 16.700px; }
.outer-bar > span { margin-top: 2px; }
.ob-win { width: 24px; height: 24px; margin-right: 30px; color: #000; }
.ob-search { width: 24px; height: 24px; margin-right: 30px; }
.ob-tv { width: 24px; height: 24px; margin-right: 26px; }
.task { height: 46px; display: flex; align-items: center; border-bottom: 3px solid #2656cb; padding-top: 3px; }
.task span { margin-top: 1px; }
.task svg { width: 24px; height: 24px; margin-right: 4px; }
.t-files { width: 228px; padding-left: 9px; margin-right: 23px; }
.t-files svg { width: 16px; height: 22px; margin-right: 9px; }
.ob-code { width: 24px; height: 24px; margin-right: 18px; }
.t-chrome { width: 240px; background: #efeef5; padding-left: 12px; margin-right: 17px; font-size: 16.900px; }
.ob-vs { width: 24px; height: 24px; margin-right: 24px; }
.t-teams { width: 228px; padding-left: 6px; margin-right: 14px; letter-spacing: 0.200px; }
.t-word { width: 228px; padding-left: 6px; letter-spacing: 0.480px; }
.ob-cloud { width: 32px; height: 24px; margin-left: auto; margin-right: 14px; }
.ob-deg { width: 56px; font-size: 19.700px; }
.ob-sky { width: 82px; font-size: 19.900px; }
.ob-up { width: 18px; height: 10px; margin-right: 15px; }
.ob-bat { width: 24px; height: 20px; margin: -4px 16px 0 0; color: #000; }
.ob-wifi { width: 19px; height: 20px; margin-right: 14px; }
.ob-vol { width: 24px; height: 20px; margin: -2px 16px 0 0; }
.ob-lang { width: 54px; font-size: 16.500px; }
.ob-time { width: 71px; font-size: 16.500px; }
.ob-note { width: 24px; height: 24px; margin-right: 31px; }
.ob-edge { width: 1.500px; height: 46px; background: #a9adb8; margin-right: 5.500px; }
```
